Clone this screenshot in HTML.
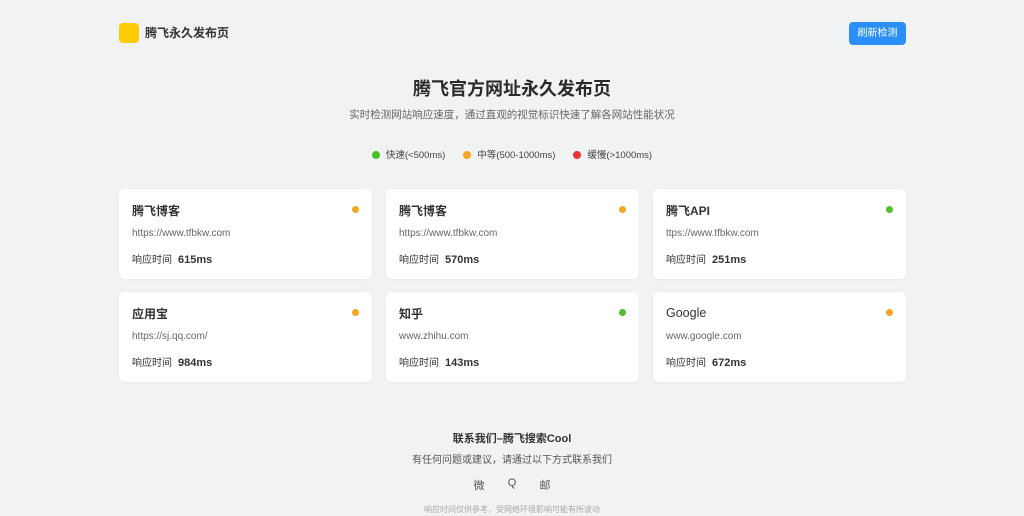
<!DOCTYPE html>
<html><head><meta charset="utf-8"><style>
*{margin:0;padding:0;box-sizing:border-box}
body{width:1024px;height:516px;background:#f1f2f4;font-family:"Liberation Sans","Noto Sans CJK SC",sans-serif;color:#333;position:relative;overflow:hidden}
.logo{position:absolute;left:119px;top:23px;width:20px;height:20px;background:#fccb05;border-radius:4px}
.brand{position:absolute;left:145px;top:25px;font-size:12px;font-weight:bold;color:#333;line-height:16px}
.btn{position:absolute;left:849px;top:22px;width:57px;height:23px;background:#2a8ffb;border-radius:4px;color:#fff;font-size:10px;line-height:23px;text-align:center}
h1{position:absolute;top:77px;left:0;width:1024px;text-align:center;font-size:18px;font-weight:bold;color:#2a2a2a;line-height:24px}
.sub{position:absolute;top:107px;width:1024px;text-align:center;font-size:10.5px;color:#666;line-height:16px}
.legend{position:absolute;top:149px;width:1024px;text-align:center;font-size:9.5px;color:#444;line-height:14px}
.legend span{margin:0 9px}
.d{display:inline-block;width:8px;height:8px;border-radius:50%;vertical-align:-1px;margin-right:6px}
.g{background:#4cc22a}.o{background:#f5a623}.r{background:#e8333a}
.card{position:absolute;width:253px;height:90px;background:#fff;border-radius:6px;box-shadow:0 1px 3px rgba(0,0,0,.04)}
.card .t{position:absolute;left:13px;top:13px;font-size:12px;font-weight:bold;color:#333}
.card .u{position:absolute;left:13px;top:39px;font-size:10px;color:#666}
.card .m{position:absolute;left:13px;top:62px;font-size:10px;color:#333}
.card .m b{font-size:11px;margin-left:6px}
.card .d{position:absolute;right:13px;top:17px;width:7px;height:7px;margin:0}
.ct{position:absolute;top:430px;width:1024px;text-align:center;font-size:11px;font-weight:bold;color:#333}
.cs{position:absolute;top:451px;width:1024px;text-align:center;font-size:10px;color:#555}
.ic{position:absolute;top:477px;font-size:11px;color:#555;width:20px;text-align:center}
.ft{position:absolute;top:504px;width:1024px;text-align:center;font-size:8px;color:#aaa}
</style></head><body>
<div class="logo"></div><div class="brand">腾飞永久发布页</div>
<div class="btn">刷新检测</div>
<h1>腾飞官方网址永久发布页</h1>
<div class="sub">实时检测网站响应速度，通过直观的视觉标识快速了解各网站性能状况</div>
<div class="legend"><span><i class="d g"></i>快速(&lt;500ms)</span><span><i class="d o"></i>中等(500-1000ms)</span><span><i class="d r"></i>缓慢(&gt;1000ms)</span></div>

<div class="card" style="left:119px;top:189px"><div class="t">腾飞博客</div><i class="d o"></i><div class="u">https://www.tfbkw.com</div><div class="m">响应时间<b>615ms</b></div></div>
<div class="card" style="left:386px;top:189px"><div class="t">腾飞博客</div><i class="d o"></i><div class="u">https://www.tfbkw.com</div><div class="m">响应时间<b>570ms</b></div></div>
<div class="card" style="left:653px;top:189px"><div class="t">腾飞API</div><i class="d g"></i><div class="u">ttps://www.tfbkw.com</div><div class="m">响应时间<b>251ms</b></div></div>
<div class="card" style="left:119px;top:292px"><div class="t">应用宝</div><i class="d o"></i><div class="u">https://sj.qq.com/</div><div class="m">响应时间<b>984ms</b></div></div>
<div class="card" style="left:386px;top:292px"><div class="t">知乎</div><i class="d g"></i><div class="u">www.zhihu.com</div><div class="m">响应时间<b>143ms</b></div></div>
<div class="card" style="left:653px;top:292px"><div class="t" style="font-weight:normal;font-size:12.5px;top:14px">Google</div><i class="d o"></i><div class="u">www.google.com</div><div class="m">响应时间<b>672ms</b></div></div>

<div class="ct">联系我们–腾飞搜索Cool</div>
<div class="cs">有任何问题或建议，请通过以下方式联系我们</div>
<div class="ic" style="left:469px">微</div>
<div class="ic" style="left:502px">Q</div>
<div class="ic" style="left:535px">邮</div>
<div class="ft">响应时间仅供参考，受网络环境影响可能有所波动</div>
</body></html>
